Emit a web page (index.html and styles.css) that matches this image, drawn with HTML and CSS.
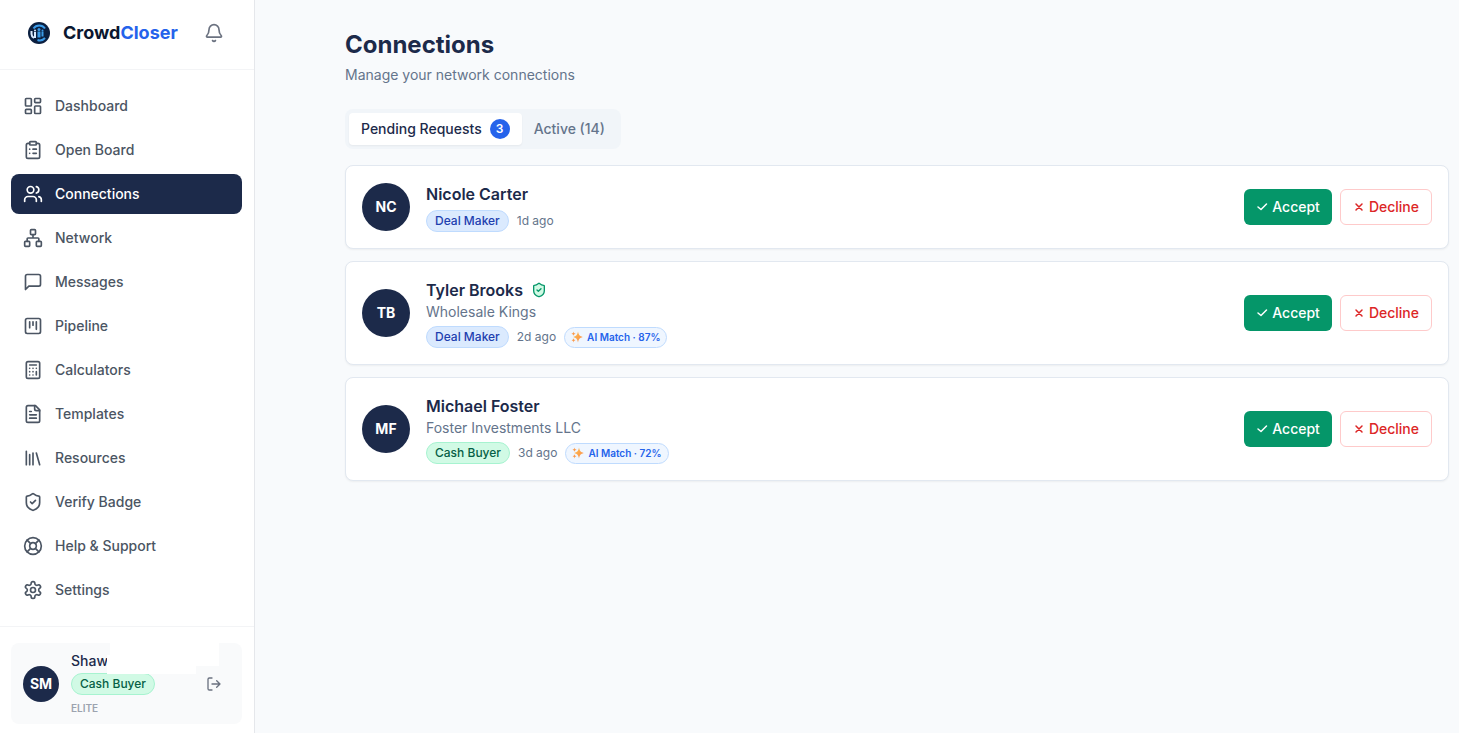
FILE: index.html
```html
<!DOCTYPE html>
<html lang="en">
<head>
    <meta charset="UTF-8">
    <meta name="viewport" content="width=device-width, initial-scale=1.0">
    <title>Connections - CrowdCloser</title>
    <link rel="stylesheet" href="styles.css">
</head>
<body>
    <!-- Shared icons -->
    <svg class="sprite" aria-hidden="true">
        <symbol id="i-check" viewBox="0 0 24 24"><path d="M21 6 10 17l-6-5"/></symbol>
        <symbol id="i-x" viewBox="0 0 24 24"><path d="M18 6 6 18M6 6l12 12"/></symbol>
        <symbol id="i-shield" viewBox="0 0 24 24"><path d="M20 13c0 5-3.5 7.5-7.66 8.95a1 1 0 0 1-.67-.01C7.5 20.5 4 18 4 13V6a1 1 0 0 1 1-1c2 0 4.5-1.2 6.24-2.72a1.17 1.17 0 0 1 1.52 0C14.51 3.81 17 5 19 5a1 1 0 0 1 1 1z"/><path d="m9 12 2 2 4-4"/></symbol>
        <symbol id="i-sparkles" viewBox="0 0 24 24">
            <linearGradient id="spark" x1="0" y1="0" x2="1" y2="1">
                <stop offset="0" stop-color="#fdc04d"/>
                <stop offset="1" stop-color="#fb8a4b"/>
            </linearGradient>
            <path fill="url(#spark)" stroke="none" d="M14 1c1.500 7 3 9 9.500 11-6.500 2-8 4-9.500 11-1.500-7-3-9-9.500-11C11 10 12.500 8 14 1z"/>
            <path fill="#fb9a4b" stroke="none" d="M5 1c.5 3 1.500 4 4.500 4.500C6.500 6 5.500 7 5 10 4.500 7 3.500 6 .5 5.500 3.500 5 4.500 4 5 1zM5 14c.5 3 1.500 4 4 4.500-2.500.5-3.500 1.500-4 4.500-.5-3-1.500-4-4-4.500 2.500-.5 3.500-1.500 4-4.500z"/>
        </symbol>
    </svg>

    <aside class="sidebar">
        <header class="brand">
            <svg class="logo" viewBox="0 0 44 44" aria-hidden="true">
                <circle cx="22" cy="22" r="22" fill="#0b1f3f"/>
                <path d="M11 13a14 14 0 0 1 23 0M19 36a14 14 0 0 0 15-4" fill="none" stroke="#3b9be8" stroke-width="4"/>
                <path d="M7 18v6q0 5 5 8M14 20v12" fill="none" stroke="#dbeafe" stroke-width="4"/>
                <path d="M19 19h6v12h-6zM27 19h4v10h-4z" fill="#3b9be8"/>
                <circle cx="14" cy="17" r="2" fill="#dbeafe"/>
                <circle cx="22" cy="15" r="3" fill="#3b9be8"/>
                <circle cx="29" cy="17" r="2" fill="#3b9be8"/>
            </svg>
            <span class="brand-name">Crowd<span>Closer</span></span>
            <button class="icon-button bell" aria-label="Notifications">
                <svg class="icon" viewBox="0 0 24 24"><path d="M10.268 21a2 2 0 0 0 3.464 0"/><path d="M3.262 15.326A1 1 0 0 0 4 17h16a1 1 0 0 0 .74-1.673C19.410 13.956 18 12.499 18 8A6 6 0 0 0 6 8c0 4.499-1.411 5.956-2.738 7.326"/></svg>
            </button>
        </header>

        <nav class="nav">
            <a href="#">
                <svg class="icon" viewBox="0 0 24 24"><rect width="7" height="9" x="3" y="3" rx="1"/><rect width="7" height="5" x="14" y="3" rx="1"/><rect width="7" height="9" x="14" y="12" rx="1"/><rect width="7" height="5" x="3" y="16" rx="1"/></svg>
                Dashboard
            </a>
            <a href="#">
                <svg class="icon" viewBox="0 0 24 24"><rect width="8" height="4" x="8" y="2" rx="1"/><path d="M16 4h2a2 2 0 0 1 2 2v14a2 2 0 0 1-2 2H6a2 2 0 0 1-2-2V6a2 2 0 0 1 2-2h2M12 11h4M12 16h4M8 11h.01M8 16h.01"/></svg>
                Open Board
            </a>
            <a href="#" class="active" aria-current="page">
                <svg class="icon" viewBox="0 0 24 24"><path d="M16 21v-2a4 4 0 0 0-4-4H6a4 4 0 0 0-4 4v2"/><circle cx="9" cy="7" r="4"/><path d="M22 21v-2a4 4 0 0 0-3-3.870M16 3.130a4 4 0 0 1 0 7.750"/></svg>
                Connections
            </a>
            <a href="#">
                <svg class="icon" viewBox="0 0 24 24"><rect x="16" y="16" width="6" height="6" rx="1"/><rect x="2" y="16" width="6" height="6" rx="1"/><rect x="9" y="2" width="6" height="6" rx="1"/><path d="M5 16v-3a1 1 0 0 1 1-1h12a1 1 0 0 1 1 1v3M12 12V8"/></svg>
                Network
            </a>
            <a href="#">
                <svg class="icon" viewBox="0 0 24 24"><path d="M21 15a2 2 0 0 1-2 2H7l-4 4V5a2 2 0 0 1 2-2h14a2 2 0 0 1 2 2z"/></svg>
                Messages
            </a>
            <a href="#">
                <svg class="icon" viewBox="0 0 24 24"><rect width="18" height="18" x="3" y="3" rx="2"/><path d="M8 7v7M12 7v4M16 7v9"/></svg>
                Pipeline
            </a>
            <a href="#">
                <svg class="icon" viewBox="0 0 24 24"><rect width="16" height="20" x="4" y="2" rx="2"/><path d="M8 6h8M16 14v4M16 10h.01M12 10h.01M8 10h.01M12 14h.01M8 14h.01M12 18h.01M8 18h.01"/></svg>
                Calculators
            </a>
            <a href="#">
                <svg class="icon" viewBox="0 0 24 24"><path d="M15 2H6a2 2 0 0 0-2 2v16a2 2 0 0 0 2 2h12a2 2 0 0 0 2-2V7z"/><path d="M14 2v4a2 2 0 0 0 2 2h4M10 9H8M16 13H8M16 17H8"/></svg>
                Templates
            </a>
            <a href="#">
                <svg class="icon" viewBox="0 0 24 24"><path d="m16 6 4 14M12 6v14M8 8v12M4 4v16"/></svg>
                Resources
            </a>
            <a href="#">
                <svg class="icon"><use href="#i-shield"/></svg>
                Verify Badge
            </a>
            <a href="#">
                <svg class="icon" viewBox="0 0 24 24"><circle cx="12" cy="12" r="10"/><path d="m4.930 4.930 4.240 4.240M14.830 9.170l4.240-4.240M14.830 14.830l4.240 4.240M9.170 14.830l-4.240 4.240"/><circle cx="12" cy="12" r="4"/></svg>
                Help &amp; Support
            </a>
            <a href="#">
                <svg class="icon" viewBox="0 0 24 24"><path d="M12.220 2h-.44a2 2 0 0 0-2 2v.18a2 2 0 0 1-1 1.730l-.43.25a2 2 0 0 1-2 0l-.15-.08a2 2 0 0 0-2.730.73l-.22.38a2 2 0 0 0 .73 2.730l.15.1a2 2 0 0 1 1 1.720v.51a2 2 0 0 1-1 1.740l-.15.09a2 2 0 0 0-.73 2.730l.22.38a2 2 0 0 0 2.730.73l.15-.08a2 2 0 0 1 2 0l.43.25a2 2 0 0 1 1 1.730V20a2 2 0 0 0 2 2h.44a2 2 0 0 0 2-2v-.18a2 2 0 0 1 1-1.730l.43-.25a2 2 0 0 1 2 0l.15.08a2 2 0 0 0 2.730-.73l.22-.39a2 2 0 0 0-.73-2.730l-.15-.08a2 2 0 0 1-1-1.740v-.5a2 2 0 0 1 1-1.740l.15-.09a2 2 0 0 0 .73-2.730l-.22-.38a2 2 0 0 0-2.730-.73l-.15.08a2 2 0 0 1-2 0l-.43-.25a2 2 0 0 1-1-1.730V4a2 2 0 0 0-2-2z"/><circle cx="12" cy="12" r="3"/></svg>
                Settings
            </a>
        </nav>

        <footer class="account">
            <div class="account-card">
                <span class="avatar small">SM</span>
                <div class="account-info">
                    <span class="account-name">Shaw</span>
                    <span class="badge green">Cash Buyer</span>
                    <span class="plan">ELITE</span>
                </div>
                <button class="icon-button" aria-label="Log out">
                    <svg class="icon" viewBox="0 0 24 24"><path d="M9 21H5a2 2 0 0 1-2-2V5a2 2 0 0 1 2-2h4M16 17l5-5-5-5M21 12H9"/></svg>
                </button>
                <!-- Hides the surname -->
                <span class="mask mask-top"></span>
                <span class="mask mask-name"></span>
            </div>
        </footer>
    </aside>

    <main class="content">
        <h1>Connections</h1>
        <p class="subtitle">Manage your network connections</p>

        <div class="tabs" role="tablist">
            <button class="tab selected" role="tab" aria-selected="true">Pending Requests <span class="count">3</span></button>
            <button class="tab" role="tab" aria-selected="false">Active (14)</button>
        </div>

        <section class="requests">
            <article class="card">
                <span class="avatar">NC</span>
                <div class="person">
                    <h2>Nicole Carter</h2>
                    <div class="meta">
                        <span class="badge blue">Deal Maker</span>
                        <span class="time">1d ago</span>
                    </div>
                </div>
                <div class="actions">
                    <button class="accept"><svg class="icon"><use href="#i-check"/></svg>Accept</button>
                    <button class="decline"><svg class="icon"><use href="#i-x"/></svg>Decline</button>
                </div>
            </article>

            <article class="card">
                <span class="avatar">TB</span>
                <div class="person">
                    <h2>Tyler Brooks <svg class="icon verified"><use href="#i-shield"/></svg></h2>
                    <p>Wholesale Kings</p>
                    <div class="meta">
                        <span class="badge blue">Deal Maker</span>
                        <span class="time">2d ago</span>
                        <span class="match"><svg class="icon"><use href="#i-sparkles"/></svg>AI Match · 87%</span>
                    </div>
                </div>
                <div class="actions">
                    <button class="accept"><svg class="icon"><use href="#i-check"/></svg>Accept</button>
                    <button class="decline"><svg class="icon"><use href="#i-x"/></svg>Decline</button>
                </div>
            </article>

            <article class="card">
                <span class="avatar">MF</span>
                <div class="person">
                    <h2>Michael Foster</h2>
                    <p>Foster Investments LLC</p>
                    <div class="meta">
                        <span class="badge green">Cash Buyer</span>
                        <span class="time">3d ago</span>
                        <span class="match"><svg class="icon"><use href="#i-sparkles"/></svg>AI Match · 72%</span>
                    </div>
                </div>
                <div class="actions">
                    <button class="accept"><svg class="icon"><use href="#i-check"/></svg>Accept</button>
                    <button class="decline"><svg class="icon"><use href="#i-x"/></svg>Decline</button>
                </div>
            </article>
        </section>
    </main>
</body>
</html>
```
FILE: styles.css
```css
/* General Styling */
* {
    box-sizing: border-box;
}

body {
    margin: 0;
    min-height: 100vh;
    display: flex;
    background: #f8fafc;
    color: #1c2a4a;
    font-family: Inter, "Liberation Sans", sans-serif;
    font-size: 14px;
    line-height: 20px;
}

h1, h2, p {
    margin: 0;
}

button {
    font: inherit;
    border: none;
    background: none;
    padding: 0;
    cursor: pointer;
}

.sprite {
    position: absolute;
    width: 0;
    height: 0;
}

.icon {
    width: 20px;
    height: 20px;
    flex-shrink: 0;
    fill: none;
    stroke: currentColor;
    stroke-width: 2;
    stroke-linecap: round;
    stroke-linejoin: round;
}

/* Sidebar */
.sidebar {
    width: 255px;
    flex-shrink: 0;
    display: flex;
    flex-direction: column;
    background: white;
    border-right: 1px solid #e5e7eb;
}

.brand {
    height: 70px;
    display: flex;
    align-items: center;
    padding: 0 30px 4px 28px;
    border-bottom: 1px solid #f3f4f6;
}

.logo {
    width: 22px;
    height: 22px;
    margin-right: 13px;
}

.brand-name {
    font-size: 18px;
    font-weight: 700;
    line-height: 28px;
    color: #0b1730;
}

.brand-name span {
    color: #2563eb;
}

.icon-button {
    display: flex;
    color: #6b7280;
}

.bell {
    margin-left: auto;
}

.nav {
    display: flex;
    flex-direction: column;
    gap: 4px;
    padding: 16px 12px 16px 11px;
}

.nav a {
    display: flex;
    align-items: center;
    gap: 12px;
    padding: 10px 12px;
    border-radius: 8px;
    color: #4b5563;
    font-weight: 500;
    text-decoration: none;
}

.nav a.active {
    background: #1c2a4a;
    color: white;
}

/* Account box */
.account {
    margin-top: auto;
    border-top: 1px solid #f3f4f6;
    padding: 16px 12px 9px 11px;
}

.account-card {
    position: relative;
    display: flex;
    align-items: center;
    gap: 12px;
    padding: 8px 20px 8px 12px;
    border-radius: 8px;
    background: #f9fafb;
}

.account-card .icon {
    width: 16px;
    height: 16px;
}

.account-info {
    flex: 1;
    display: flex;
    flex-direction: column;
    align-items: flex-start;
}

.account-name {
    font-weight: 500;
    margin-bottom: 2px;
}

.plan {
    margin-top: 6px;
    font-size: 10px;
    line-height: 15px;
    font-weight: 600;
    color: #9ca3af;
}

.mask {
    position: absolute;
    background: white;
}

.mask-top {
    top: 0;
    left: 99px;
    width: 109px;
    height: 23px;
}

.mask-name {
    top: 12px;
    left: 96px;
    width: 89px;
    height: 19px;
}

.avatar {
    width: 48px;
    height: 48px;
    flex-shrink: 0;
    display: flex;
    align-items: center;
    justify-content: center;
    border-radius: 50%;
    background: #1c2a4a;
    color: white;
    font-weight: 700;
}

.avatar.small {
    width: 36px;
    height: 36px;
}

.badge {
    padding: 2px 8px;
    border: 1px solid;
    border-radius: 11px;
    font-size: 12px;
    line-height: 16px;
    font-weight: 500;
}

.badge.blue {
    background: #dbeafe;
    border-color: #bfdbfe;
    color: #1e40af;
}

.badge.green {
    background: #d1fae5;
    border-color: #a7f3d0;
    color: #065f46;
}

/* Main content */
.content {
    flex: 1;
    min-width: 0;
    padding: 29px 10px 29px 90px;
}

h1 {
    font-size: 24px;
    line-height: 32px;
    font-weight: 700;
}

.subtitle {
    margin: 4px 0 24px;
    color: #64748b;
}

.tabs {
    display: inline-flex;
    padding: 4px;
    margin-bottom: 16px;
    border-radius: 8px;
    background: #f1f5f9;
}

.tab {
    display: flex;
    align-items: center;
    gap: 8px;
    padding: 6px 12px;
    border-radius: 4px;
    color: #64748b;
    font-weight: 500;
}

.tab.selected {
    background: white;
    color: #1c2a4a;
    box-shadow: 0 1px 2px rgba(0, 0, 0, 0.05);
}

.count {
    width: 20px;
    height: 20px;
    border-radius: 50%;
    background: #2563eb;
    color: white;
    font-size: 12px;
    font-weight: 600;
    text-align: center;
}

.requests {
    display: flex;
    flex-direction: column;
    gap: 12px;
}

.card {
    display: flex;
    align-items: center;
    gap: 16px;
    padding: 16px;
    border: 1px solid #e2e8f0;
    border-radius: 8px;
    background: white;
    box-shadow: 0 1px 2px rgba(0, 0, 0, 0.05);
}

.person {
    flex: 1;
    min-width: 0;
}

.person h2 {
    display: flex;
    align-items: center;
    gap: 8px;
    font-size: 16px;
    line-height: 24px;
    font-weight: 600;
}

.person p {
    color: #64748b;
}

.person .verified {
    width: 16px;
    height: 16px;
    fill: #d1fae5;
    color: #059669;
}

.meta {
    display: flex;
    align-items: center;
    gap: 8px;
    margin-top: 4px;
}

.time {
    font-size: 12px;
    line-height: 16px;
    color: #64748b;
}

.match {
    display: flex;
    align-items: center;
    gap: 4px;
    padding: 2px 6px;
    border: 1px solid #bfdbfe;
    border-radius: 11px;
    background: #eff6ff;
    color: #2563eb;
    font-size: 10px;
    line-height: 15px;
    font-weight: 600;
}

.match .icon {
    width: 12px;
    height: 12px;
}

.actions {
    display: flex;
    gap: 8px;
}

.actions button {
    height: 36px;
    display: flex;
    align-items: center;
    gap: 4px;
    padding: 0 12px;
    border-radius: 6px;
    font-weight: 500;
}

.actions .icon {
    width: 12px;
    height: 12px;
    stroke-width: 3;
}

.actions .accept {
    background: #059669;
    color: white;
}

.actions .decline {
    border: 1px solid #fecaca;
    background: white;
    color: #dc2626;
}
```
